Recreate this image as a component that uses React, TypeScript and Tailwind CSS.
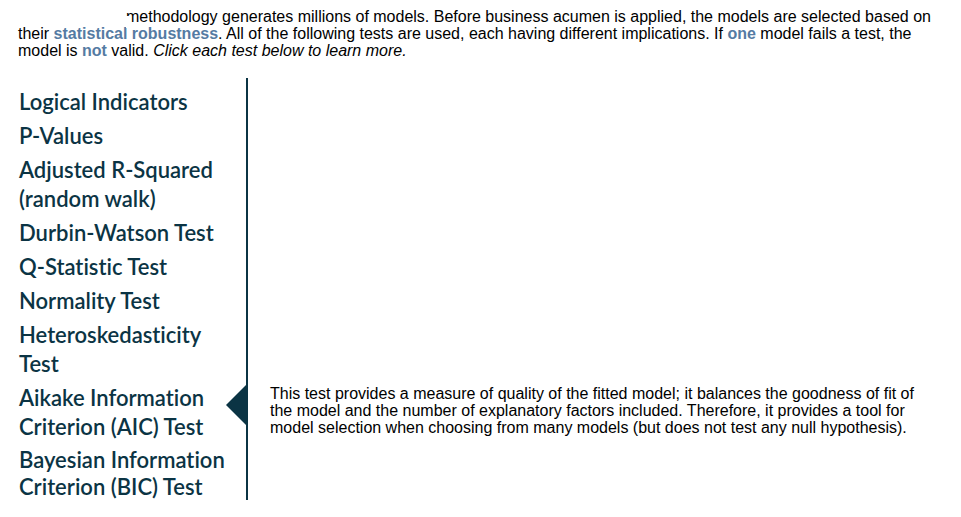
const tests: string[][] = [
  ['Logical Indicators'],
  ['P-Values'],
  ['Adjusted R-Squared', '(random walk)'],
  ['Durbin-Watson Test'],
  ['Q-Statistic Test'],
  ['Normality Test'],
  ['Heteroskedasticity', 'Test'],
  ['Aikake Information', 'Criterion (AIC) Test'],
  ['Bayesian Information', 'Criterion (BIC) Test'],
];

const ACTIVE = 7;

export default function App() {
  return (
    <main className="bg-white pt-2 pl-[18px] pr-6 font-['Liberation_Sans',Arial,sans-serif] text-[16px] leading-[17px] text-black">
      <p className="indent-[108px]">
        <span className="relative">
          methodology
          <span className="absolute top-2 left-0 h-3 w-1 bg-white" />
        </span>{' '}
        generates millions of models. Before business acumen is applied, the models are selected based on their{' '}
        <b className="text-[#557ba3]">statistical robustness</b>. All of the following tests are used, each having
        different implications. If <b className="text-[#557ba3]">one</b> model fails a test, the model is{' '}
        <b className="text-[#557ba3]">not</b> valid. <i>Click each test below to learn more.</i>
      </p>
      <div className="mt-[19px] flex">
        <nav className="flex w-[230px] shrink-0 flex-col gap-[5px] border-r-2 border-[#0b3444] pt-[9px] pl-px font-['Lato',sans-serif] [font-variant-ligatures:none]">
          {tests.map((lines, i) => (
            <button
              key={lines[0]}
              className="relative w-full text-left text-[22px] font-semibold leading-[29px] text-[#0b3444] last:leading-[27px]"
            >
              {lines.map((line) => (
                <span key={line} className="block whitespace-nowrap">
                  {line}
                </span>
              ))}
              {i === ACTIVE && (
                <svg className="absolute right-0 top-0.5 h-10 w-5" viewBox="0 0 20 40" aria-hidden="true">
                  <path d="M20 0v40L0 20z" fill="#0b3444" />
                </svg>
              )}
            </button>
          ))}
        </nav>
        <p className="mt-[307px] flex-1 pl-[22px] pr-[18px]">
          This test provides a measure of quality of the fitted model; it balances the goodness of fit of the model and
          the number of explanatory factors included. Therefore, it provides a tool for model selection when choosing
          from many models (but does not test any null hypothesis).
        </p>
      </div>
    </main>
  );
}
